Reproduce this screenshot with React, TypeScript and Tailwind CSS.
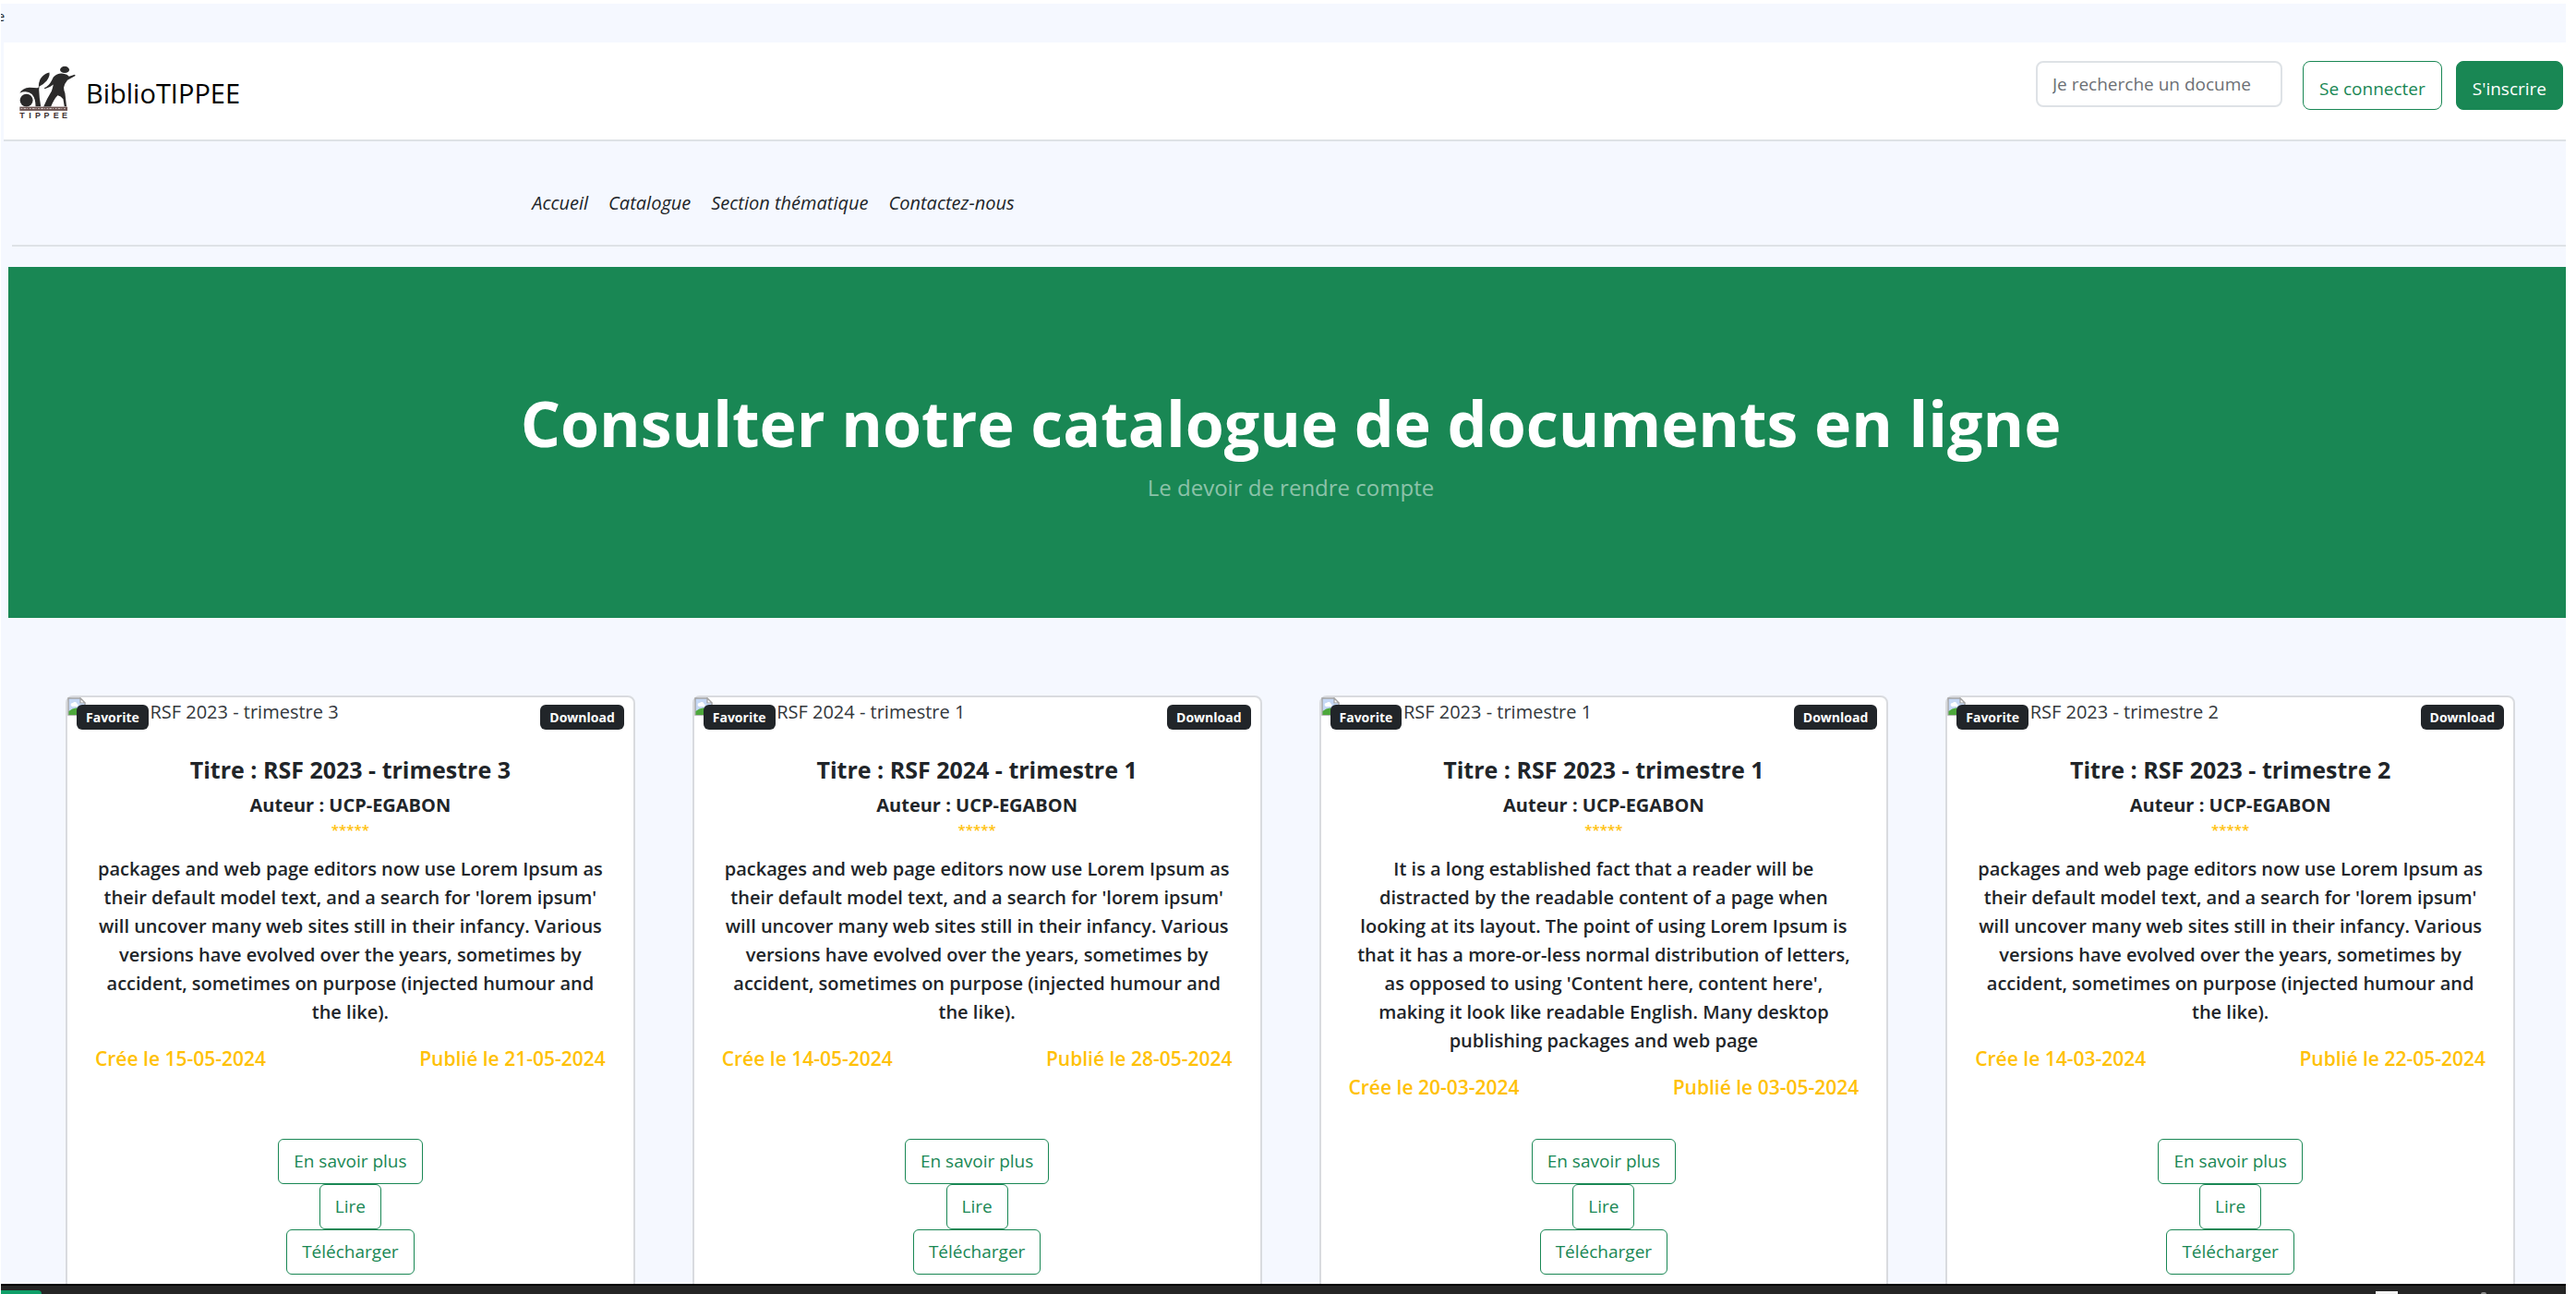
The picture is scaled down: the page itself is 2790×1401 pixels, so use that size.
import React from "react";

type Doc = {
  id: number;
  title: string;
  author: string;
  text: string;
  created: string;
  published: string;
};

const PACKAGES =
  "packages and web page editors now use Lorem Ipsum as their default model text, and a search for 'lorem ipsum' will uncover many web sites still in their infancy. Various versions have evolved over the years, sometimes by accident, sometimes on purpose (injected humour and the like).";
const ESTABLISHED =
  "It is a long established fact that a reader will be distracted by the readable content of a page when looking at its layout. The point of using Lorem Ipsum is that it has a more-or-less normal distribution of letters, as opposed to using 'Content here, content here', making it look like readable English. Many desktop publishing packages and web page";

const DOCS: Doc[] = [
  { id: 1, title: "RSF 2023 - trimestre 3", author: "UCP-EGABON", text: PACKAGES, created: "15-05-2024", published: "21-05-2024" },
  { id: 2, title: "RSF 2024 - trimestre 1", author: "UCP-EGABON", text: PACKAGES, created: "14-05-2024", published: "28-05-2024" },
  { id: 3, title: "RSF 2023 - trimestre 1", author: "UCP-EGABON", text: ESTABLISHED, created: "20-03-2024", published: "03-05-2024" },
  { id: 4, title: "RSF 2023 - trimestre 2", author: "UCP-EGABON", text: PACKAGES, created: "14-03-2024", published: "22-05-2024" },
];

const LINKS = ["Accueil", "Catalogue", "Section thématique", "Contactez-nous"];

function Logo() {
  return (
    <svg viewBox="30 30 190 180" className="h-[60px] w-[63px]" role="img" aria-label="TIPPEE">
      <g fill="#2b2a2a">
        <ellipse cx="181" cy="46" rx="15" ry="11" />
        <path d="M144 70 Q158 56 176 59 Q190 61 195 68 L214 62 L216 66 L190 80 Q180 92 178 104 Q178 112 182 122 L187 166 L180 166 L176 142 Q168 132 158 130 Q146 142 136 167 L112 167 Q124 138 138 116 Q142 104 144 94 Q132 104 116 109 L114 106 Q130 98 138 82 Z" />
        <path d="M96 99 Q96 80 108 68 Q120 56 131 55 Q133 68 122 82 Q112 94 96 102 Z" />
        <path d="M34 122 Q44 106 66 104 L92 106 Q96 104 98 100 L97 112 Q98 140 103 166 L86 166 Q86 140 74 126 Q58 112 34 122 Z" />
        <circle cx="56" cy="146" r="21" />
      </g>
      <rect x="34" y="167" width="156" height="13" fill="#6a5250" />
      <path d="M38 173 H186" stroke="#d9cfcd" strokeWidth="3" strokeDasharray="5 4 8 3 3 5" />
      <text x="34 64 84 113 144 172" y="203" fontSize="27" fontWeight="700" fill="#3d3030" fontFamily="Liberation Sans, sans-serif">
        TIPPEE
      </text>
    </svg>
  );
}

function BrokenImage() {
  return (
    <svg viewBox="0 0 20 20" className="size-5 shrink-0" aria-hidden="true">
      <path d="M1 1 H14 L19 6 V19 H1 Z" fill="#c5d8f5" stroke="#a3a3a3" strokeWidth="1.4" />
      <path d="M4 9 a2 2 0 0 1 2-3 a2.5 2.5 0 0 1 4.5 1 a2 2 0 0 1 .5 3 H5 Z" fill="#fff" />
      <path d="M1.5 19 L1.5 15 Q8 9 15 13 L10 19 Z" fill="#4ea83c" />
      <path d="M14 1 V6 H19 Z" fill="#fff" stroke="#a3a3a3" strokeWidth="1.2" />
      <path d="M19 10 L10 19 H19 Z" fill="#fff" />
    </svg>
  );
}

function OutlineButton({ children }: { children: React.ReactNode }) {
  return (
    <button className="rounded-md border border-[#198754] px-4 py-2 text-[19px] leading-[31px] text-[#198754]">
      {children}
    </button>
  );
}

function Card({ doc }: { doc: Doc }) {
  return (
    <article className="relative flex flex-col rounded-lg border-2 border-[#d9dbdf] bg-white pb-8">
      <div className="flex items-start text-[20px] leading-[31px] text-[#33373b]">
        <BrokenImage />
        <span>Affiche {doc.title}</span>
      </div>
      <span className="absolute top-2 left-2.5 rounded-md bg-[#212529] px-2.5 py-1 text-[14px] leading-[19px] font-bold text-white">
        Favorite
      </span>
      <span className="absolute top-2 right-2.5 rounded-md bg-[#212529] px-2.5 py-1 text-[14px] leading-[19px] font-bold text-white">
        Download
      </span>
      <div className="px-[30px] pt-8 text-center text-[20px] leading-[31px] font-semibold">
        <h2 className="mb-2 text-[25px] leading-[30px] font-bold">Titre : {doc.title}</h2>
        <p className="font-bold">Auteur : {doc.author}</p>
        <p className="mb-4 text-[15px] leading-[22px] text-[#ffc107]">*****</p>
        <p className="mb-5 px-0.5">{doc.text}</p>
        <div className="flex justify-between text-[21px] text-[#ffc107]">
          <span>Crée le {doc.created}</span>
          <span>Publié le {doc.published}</span>
        </div>
      </div>
      <div className="mt-auto flex flex-col items-center pt-10">
        <OutlineButton>En savoir plus</OutlineButton>
        <OutlineButton>Lire</OutlineButton>
        <OutlineButton>Télécharger</OutlineButton>
      </div>
    </article>
  );
}

export default function App() {
  return (
    <div className="h-screen bg-white pt-1 pr-[11px] pl-px font-['Open_Sans','Noto_Sans',sans-serif] text-[#212529]">
      <div className="flex h-full flex-col overflow-hidden bg-[#f5f8ff]">
        <div className="flex h-[42px] w-1 shrink-0 justify-end overflow-hidden pt-1 text-[14px] leading-[19px]">e</div>

        <header className="ml-[3px] flex shrink-0 items-start justify-between border-b-2 border-[#dee2e6] bg-white pt-5 pr-[3px] pb-[21px] pl-4">
          <a href="#" className="mt-1 flex items-center gap-2.5 text-[29px] leading-[53px] text-black">
            <Logo />
            BiblioTIPPEE
          </a>
          <div className="flex items-start text-[19px] leading-[31px]">
            <input
              type="text"
              aria-label="Je recherche un document"
              placeholder="Je recherche un document"
              className="mr-[22px] h-[50px] w-[267px] rounded-lg border-2 border-[#dee2e6] bg-white pr-8 pl-4 placeholder:text-[#6c7075]"
            />
            <button className="mr-[15px] rounded-lg border border-[#198754] px-[17px] pt-3.5 pb-1.5 text-[#198754]">Se connecter</button>
            <button className="rounded-lg border border-[#198754] bg-[#198754] px-[17px] pt-3.5 pb-1.5 text-white">S'inscrire</button>
          </div>
        </header>

        <nav className="ml-3 shrink-0 border-b-2 border-[#dee2e6] pt-[51px] pb-[30px]">
          <ul className="ml-[20%] flex gap-[22px] pl-2.5 text-[20px] leading-[31px] italic">
            {LINKS.map((l) => (
              <li key={l}>
                <a href="#">{l}</a>
              </li>
            ))}
          </ul>
        </nav>

        <section className="mt-[22px] ml-2 shrink-0 bg-[#198754] pt-32 pb-[122px] pl-2 text-center text-white">
          <h1 className="text-[68px] leading-[82px] font-bold">Consulter notre catalogue de documents en ligne</h1>
          <p className="mt-2.5 text-[24px] leading-[38px] text-white/50">Le devoir de rendre compte</p>
        </section>

        <main className="min-h-0 flex-1 overflow-hidden pt-[84px] pr-[55px] pl-[70px]">
          <div className="grid grid-cols-4 gap-[62px]">
            {DOCS.map((d) => (
              <Card key={d.id} doc={d} />
            ))}
          </div>
        </main>

        <footer className="flex h-[11px] shrink-0 items-end border-t-2 border-black bg-[#252525]">
          <div className="h-1 w-11 rounded-tr bg-[#0f9f68]" />
          <div className="mr-[90px] ml-auto h-[3px] w-6 bg-[#f3f3f3]" />
          <div className="mr-[86px] h-0.5 w-1.5 rounded-t-full bg-[#8a8a8a]" />
        </footer>
      </div>
    </div>
  );
}
